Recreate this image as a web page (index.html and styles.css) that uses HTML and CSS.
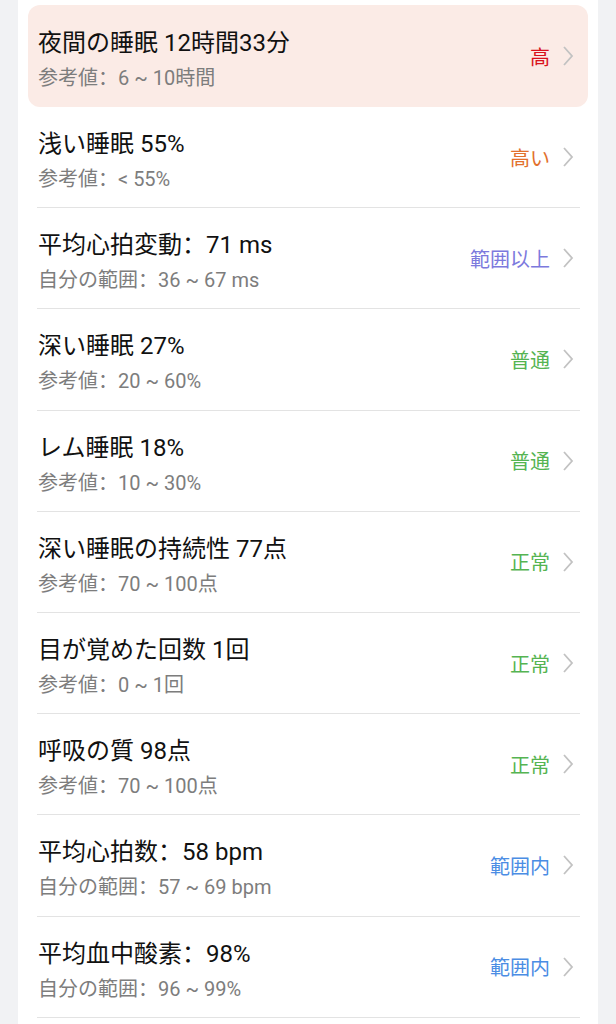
FILE: index.html
```html
<!DOCTYPE html>
<html>
<head>
<meta charset="utf-8">
<title>睡眠</title>
<link rel="stylesheet" href="styles.css">
</head>
<body>
<div id="panel">
  <div class="row alert">
    <div class="info">
      <div class="title">夜間の睡眠 12時間33分</div>
      <div class="sub">参考値：6 ~ 10時間</div>
    </div>
    <span class="status red">高</span>
    <svg class="arrow" viewBox="0 0 12 22"><polyline points="2,2 10,11 2,20"/></svg>
  </div>
  <div class="row">
    <div class="info">
      <div class="title">浅い睡眠 55%</div>
      <div class="sub">参考値：&lt; 55%</div>
    </div>
    <span class="status orange">高い</span>
    <svg class="arrow" viewBox="0 0 12 22"><polyline points="2,2 10,11 2,20"/></svg>
  </div>
  <div class="row">
    <div class="info">
      <div class="title">平均心拍変動：71 ms</div>
      <div class="sub">自分の範囲：36 ~ 67 ms</div>
    </div>
    <span class="status purple">範囲以上</span>
    <svg class="arrow" viewBox="0 0 12 22"><polyline points="2,2 10,11 2,20"/></svg>
  </div>
  <div class="row">
    <div class="info">
      <div class="title">深い睡眠 27%</div>
      <div class="sub">参考値：20 ~ 60%</div>
    </div>
    <span class="status green">普通</span>
    <svg class="arrow" viewBox="0 0 12 22"><polyline points="2,2 10,11 2,20"/></svg>
  </div>
  <div class="row">
    <div class="info">
      <div class="title">レム睡眠 18%</div>
      <div class="sub">参考値：10 ~ 30%</div>
    </div>
    <span class="status green">普通</span>
    <svg class="arrow" viewBox="0 0 12 22"><polyline points="2,2 10,11 2,20"/></svg>
  </div>
  <div class="row">
    <div class="info">
      <div class="title">深い睡眠の持続性 77点</div>
      <div class="sub">参考値：70 ~ 100点</div>
    </div>
    <span class="status green">正常</span>
    <svg class="arrow" viewBox="0 0 12 22"><polyline points="2,2 10,11 2,20"/></svg>
  </div>
  <div class="row">
    <div class="info">
      <div class="title">目が覚めた回数 1回</div>
      <div class="sub">参考値：0 ~ 1回</div>
    </div>
    <span class="status green">正常</span>
    <svg class="arrow" viewBox="0 0 12 22"><polyline points="2,2 10,11 2,20"/></svg>
  </div>
  <div class="row">
    <div class="info">
      <div class="title">呼吸の質 98点</div>
      <div class="sub">参考値：70 ~ 100点</div>
    </div>
    <span class="status green">正常</span>
    <svg class="arrow" viewBox="0 0 12 22"><polyline points="2,2 10,11 2,20"/></svg>
  </div>
  <div class="row">
    <div class="info">
      <div class="title">平均心拍数：58 bpm</div>
      <div class="sub">自分の範囲：57 ~ 69 bpm</div>
    </div>
    <span class="status blue">範囲内</span>
    <svg class="arrow" viewBox="0 0 12 22"><polyline points="2,2 10,11 2,20"/></svg>
  </div>
  <div class="row">
    <div class="info">
      <div class="title">平均血中酸素：98%</div>
      <div class="sub">自分の範囲：96 ~ 99%</div>
    </div>
    <span class="status blue">範囲内</span>
    <svg class="arrow" viewBox="0 0 12 22"><polyline points="2,2 10,11 2,20"/></svg>
  </div>
</div>
</body>
</html>
```
FILE: styles.css
```css
body {
    margin: 0;
    background-color: #f1f2f4;
    font-family: Roboto, "Noto Sans CJK SC", sans-serif;
}
#panel {
    margin: 0 18px;
    padding: 5px 10px 20px 10px;
    background-color: #ffffff;
    min-height: 1024px;
    box-sizing: border-box;
}
.row {
    display: flex;
    align-items: center;
    height: 101.2px;
    box-sizing: border-box;
    padding: 0 6px 0 1px;
    border-bottom: solid 1px #e3e3e3;
    margin: 0 8px 0 9px;
}
.row.alert {
    height: 102px;
    margin: 0;
    padding-left: 10px;
    padding-right: 14px;
    border-bottom: none;
    border-radius: 12px;
    background-color: #fbebe6;
}
.info {
    flex: 1;
    padding-top: 8px;
}
.title {
    font-size: 24px;
    line-height: 36px;
    color: #111111;
}
.sub {
    font-size: 20px;
    line-height: 34px;
    color: #7d7d7d;
}
.status {
    font-size: 20px;
    margin-right: 12px;
}
.arrow {
    width: 12px;
    height: 22px;
}
.arrow polyline {
    fill: none;
    stroke: #c2c2c2;
    stroke-width: 1.8;
}
.red { color: #d8121c; }
.orange { color: #e2702c; }
.purple { color: #7c79dd; }
.green { color: #55b452; }
.blue { color: #4b8de4; }
```
